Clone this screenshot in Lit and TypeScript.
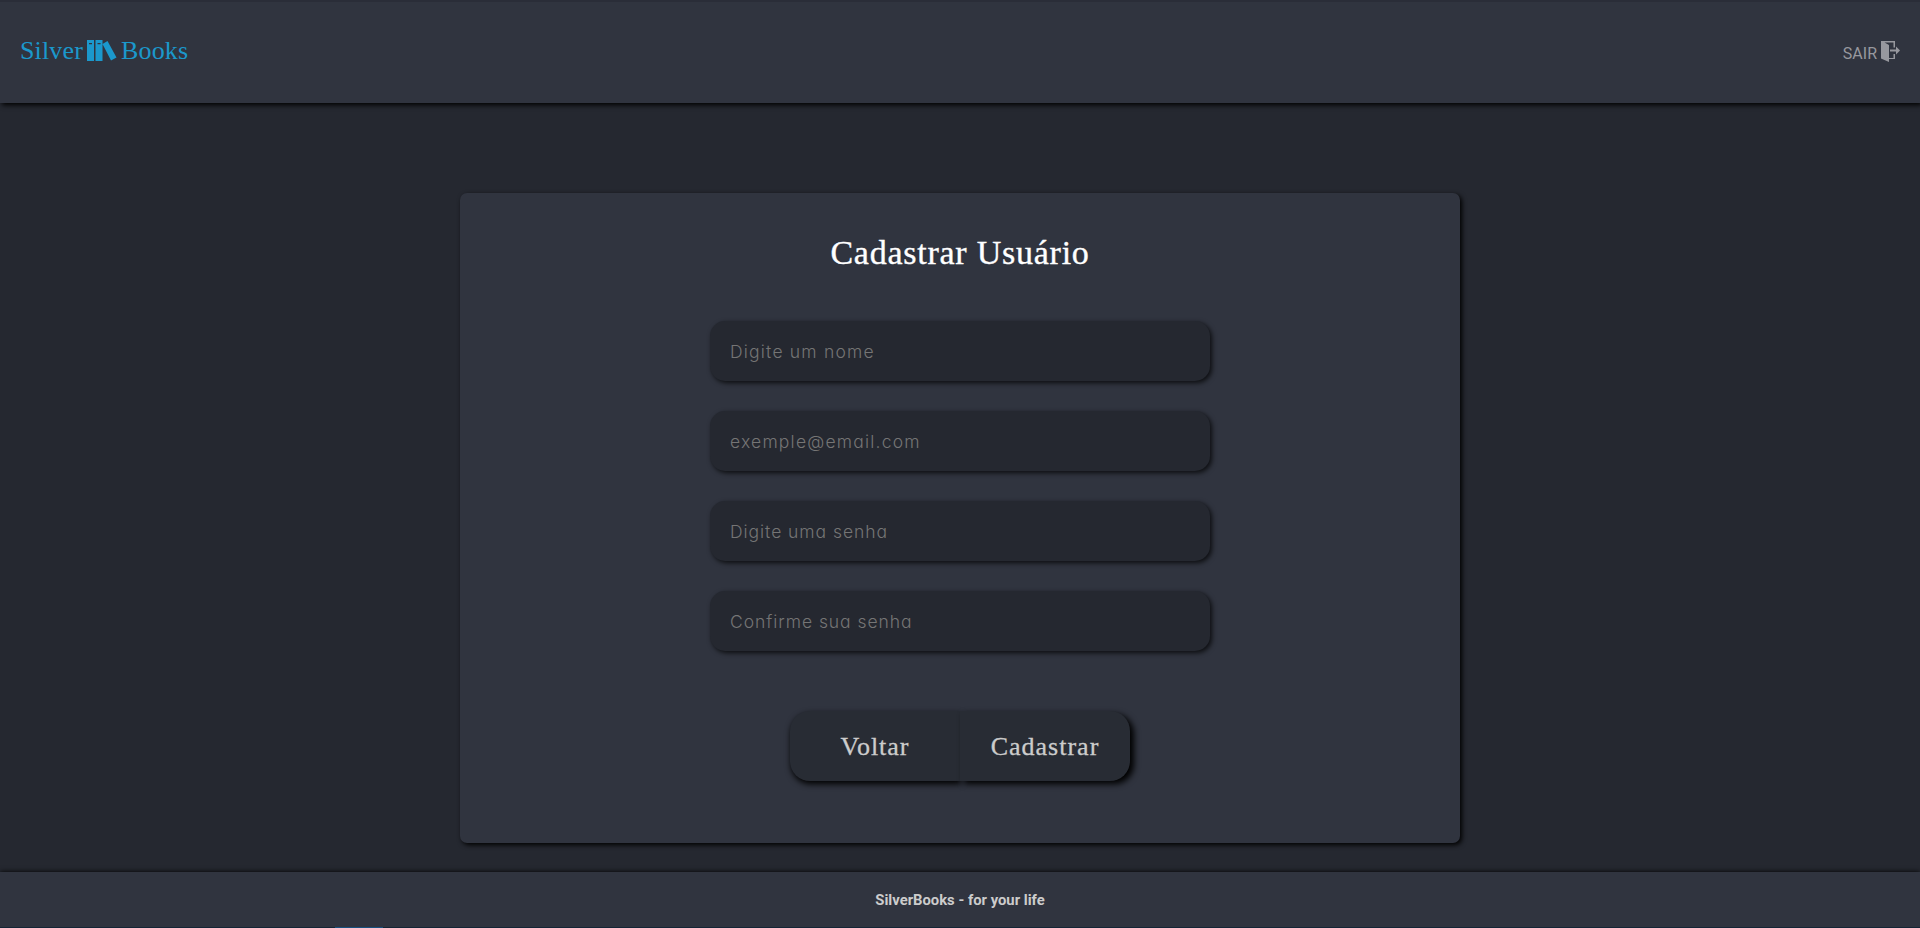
import { LitElement, html, css } from "lit";
import { customElement } from "lit/decorators.js";

const FIELDS = [
  { type: "text", hint: "Digite um nome", cls: "wide" },
  { type: "email", hint: "exemple@email.com", cls: "wide" },
  { type: "password", hint: "Digite uma senha", cls: "" },
  { type: "password", hint: "Confirme sua senha", cls: "" },
];

@customElement("app-root")
export class AppRoot extends LitElement {
  static styles = css`
    :host { display: flex; flex-direction: column; height: 928px; box-sizing: border-box; background: #252830; overflow: hidden; }
    * { box-sizing: border-box; }
    header { height: 103px; flex: none; padding: 0 20px; display: flex; align-items: center; justify-content: space-between; background: #30343f; border-top: 2px solid #2a2d38; box-shadow: 2px 2px 5px #000; }
    .logo { display: flex; align-items: center; color: #1b98cc; font: 26px/30px "Liberation Serif", serif; letter-spacing: 0.15px; padding-bottom: 4px; }
    .books { width: 30px; height: 21px; margin: 0 4px; }
    .exit { display: flex; align-items: center; gap: 4px; color: #97989e; font: 16px/20px Roboto, sans-serif; padding-top: 3px; }
    .door { width: 19px; height: 21px; margin-top: -6px; }
    main { flex: 1; display: flex; justify-content: center; align-items: flex-start; padding-top: 90px; }
    form { width: 1000px; height: 650px; border-radius: 7px; background: #30343f; box-shadow: 2px 2px 5px #000; display: flex; flex-direction: column; align-items: center; padding-top: 40px; }
    h1 { margin: 0 0 48px; color: #fff; font: 400 34px/40px "Liberation Serif", serif; letter-spacing: 0.75px; -webkit-text-stroke: 0.35px #fff; }
    .fields { display: flex; flex-direction: column; gap: 30px; }
    input { width: 500px; height: 60px; border: 0; border-radius: 15px; padding: 0 20px; background: #252830; font: 300 17.5px Inter, sans-serif; font-feature-settings: "cv11"; letter-spacing: 0.95px; color: #ccc; box-shadow: 2px 2px 5px rgba(0, 0, 0, 0.75); }
    input.wide { letter-spacing: 1.2px; }
    input::placeholder { color: #757575; opacity: 1; }
    .actions { display: flex; margin-top: 60px; }
    button { width: 170px; height: 70px; border: 0; background: #282c34; color: #ccc; font: 26px "Liberation Serif", serif; letter-spacing: 1px; -webkit-text-stroke: 0.3px #ccc; box-shadow: 3px 3px 6px #000; padding: 1px 0 0; }
    .back { border-radius: 20px 0 0 20px; box-shadow: 1px 3px 6px #000; }
    .send { border-radius: 0 20px 20px 0; box-shadow: 4px 3px 6px #000; }
    footer { height: 55px; flex: none; background: #30343f; display: flex; align-items: center; justify-content: center; color: #ccc; font: 700 14.8px/20px Roboto, sans-serif; box-shadow: 0 0 5px #000; }
    .edge { height: 1px; flex: none; padding-left: 335px; background: #142536; position: relative; }
    .edge i { display: block; width: 48px; height: 1px; background: #17507f; }
  `;

  render() {
    return html`
      <header>
        <div class="logo"><span>Silver</span>
          <svg class="books" viewBox="0 0 30 21" fill="#1b98cc"><path fill-rule="evenodd" d="M0 0h7v21H0zM2 3v1.300h3V3zM8.500 0h7v21h-7zM10.500 3v1.300h3V3zM15.500 4 20.500 1 29.500 17.500 24 20.500z"/></svg>
          <span>Books</span></div>
        <div class="exit"><span>SAIR</span>
          <svg class="door" viewBox="0 0 19 21" fill="#97989e"><path d="M0 0h14v6.500h-1.500V1.500H3.500L8 4v13h4.500v-4H14v5H8v3L0 17.500zM9 8.500h6V5.500l4 4-4 4v-3H9z"/></svg>
        </div>
      </header>
      <main>
        <form>
          <h1>Cadastrar Usuário</h1>
          <div class="fields">${FIELDS.map((f) => html`<input class=${f.cls} type=${f.type} placeholder=${f.hint} />`)}</div>
          <div class="actions">
            <button type="button" class="back">Voltar</button>
            <button type="button" class="send">Cadastrar</button>
          </div>
        </form>
      </main>
      <footer><span>SilverBooks - for your life</span></footer>
      <div class="edge"><i></i></div>
    `;
  }
}
